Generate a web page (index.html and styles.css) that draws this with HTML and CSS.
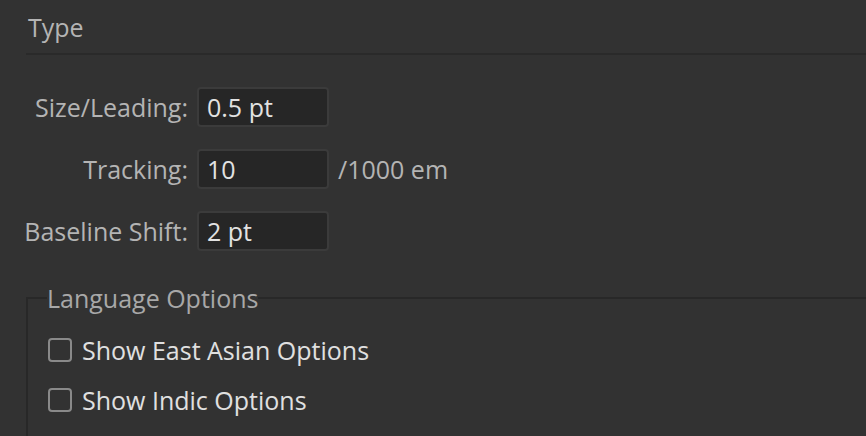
FILE: index.html
```html
<!DOCTYPE html>
<html>
<head>
<meta charset="utf-8">
<link rel="stylesheet" href="styles.css">
</head>
<body>
<div class="panel">
  <div class="section-head">Type</div>
  <div class="form">
    <label class="lbl">Size/Leading:</label>
    <div class="field">0.5 pt</div>
    <span class="unit"></span>

    <label class="lbl">Tracking:</label>
    <div class="field">10</div>
    <span class="unit">/1000 em</span>

    <label class="lbl">Baseline Shift:</label>
    <div class="field">2 pt</div>
    <span class="unit"></span>
  </div>
  <fieldset class="group">
    <legend class="group-title">Language Options</legend>
    <label class="check"><span class="box"></span><span class="check-text">Show East Asian Options</span></label>
    <label class="check"><span class="box"></span><span class="check-text">Show Indic Options</span></label>
  </fieldset>
</div>
</body>
</html>
```

FILE: styles.css
```css
html, body {
  margin: 0;
  padding: 0;
  background: #323232;
  height: 100%;
  overflow: hidden;
}
.panel {
  font-family: "Open Sans", "Liberation Sans", sans-serif;
  font-size: 25px;
  line-height: 34px;
  color: #b4b4b4;
}
.section-head {
  margin-left: 26px;
  padding: 10px 0 0 2px;
  height: 43px;
  border-bottom: 2px solid #2a2a2a;
}
.form {
  display: grid;
  grid-template-columns: 188px 132px auto;
  column-gap: 9px;
  row-gap: 22px;
  margin-top: 32px;
  align-items: center;
}
.lbl {
  text-align: right;
  white-space: nowrap;
}
.field {
  height: 40px;
  box-sizing: border-box;
  background: #262626;
  border: 2px solid #3b3b3b;
  border-radius: 4px;
  padding: 1px 0 0 8px;
  color: #e2e2e2;
}
.unit {
  white-space: nowrap;
}
.group {
  margin: 32px 0 0 26px;
  padding: 25px 0 40px 20px;
  border: 0;
  border-top: 2px solid #282828;
  border-left: 2px solid #282828;
  min-width: 0;
}
.group-title {
  padding: 0;
  margin-left: -1px;
  line-height: 30px;
  color: #a8a8a8;
}
.check {
  display: flex;
  align-items: center;
  gap: 10px;
  height: 24px;
  margin-bottom: 26px;
  color: #e0e0e0;
}
.box {
  width: 24px;
  height: 24px;
  box-sizing: border-box;
  border: 2px solid #8a8a8a;
  border-radius: 4px;
  flex: none;
}
```
